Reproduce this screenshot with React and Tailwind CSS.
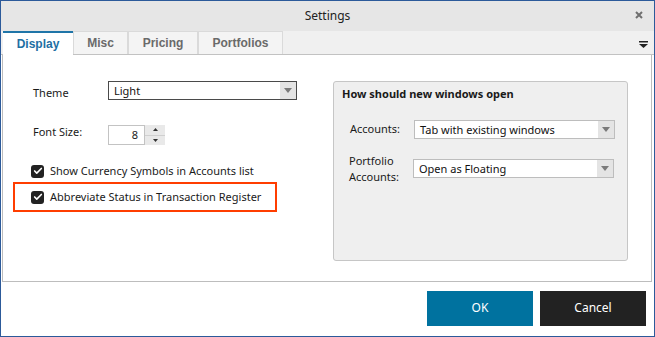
import { Check } from "lucide-react";

const ui = { fontFamily: '"Noto Sans", "Open Sans", sans-serif' };
const arial = { fontFamily: '"Liberation Sans", Arial, sans-serif' };

const Tab = ({ label, width, active }) => (
  <div
    className={`h-[23px] flex items-center justify-center text-[12px] font-bold ${width} ${
      active
        ? "bg-white border-t-2 border-t-[#1f75a8] text-[#1f6fa3] -mb-px h-[24px]"
        : "bg-[#f4f4f4] border border-[#dadada] border-b-0 text-[#6a6a6a]"
    }`}
    style={arial}
  >
    {label}
  </div>
);

const Select = ({ value, className, dark }) => (
  <div
    className={`shrink-0 flex items-center bg-white border ${
      dark ? "border-[#4a4a4a]" : "border-[#bdbdbd]"
    } ${className}`}
  >
    <span className="flex-1 pl-[5px] text-[11px] text-[#111] leading-none whitespace-nowrap">{value}</span>
    <div className="w-[16px] h-full bg-[#e4e4e4] flex items-center justify-center">
      <svg width="8" height="5" viewBox="0 0 8 5">
        <path d="M0 0h8L4 5z" fill="#7a7a7a" />
      </svg>
    </div>
  </div>
);

const CheckBox = ({ label }) => (
  <label className="flex items-center gap-[6px] h-[16px] text-[11px] text-[#1a1a1a] whitespace-nowrap">
    <span className="shrink-0 w-[13px] h-[13px] rounded-[3px] bg-[#222] flex items-center justify-center">
      <Check className="w-[10px] h-[10px] text-white" strokeWidth={4} />
    </span>
    {label}
  </label>
);

export default function App() {
  return (
    <div
      className="w-[655px] h-[337px] border border-[#2c5a9a] bg-white flex flex-col text-[#1a1a1a]"
      style={ui}
    >
      {/* title bar */}
      <div className="h-[30px] bg-[#e6e6e6] relative flex items-center justify-center text-[12px] text-[#222]">
        Settings
        <svg className="absolute right-[11px] top-[10px]" width="8" height="8" viewBox="0 0 8 8">
          <path d="M1 1l6 6M7 1L1 7" stroke="#6f6f6f" strokeWidth="2" />
        </svg>
      </div>

      {/* tab strip */}
      <div className="h-[24px] bg-[#f0f0f0] flex items-end pl-[2px] border-b border-[#c2c2c2] relative">
        <Tab label="Display" width="w-[70px]" active />
        <Tab label="Misc" width="w-[55px]" />
        <Tab label="Pricing" width="w-[70px]" />
        <Tab label="Portfolios" width="w-[85px]" />
        <svg className="absolute right-[6px] top-[10px]" width="9" height="7" viewBox="0 0 9 7">
          <rect x="0" y="0" width="9" height="1.5" fill="#222" />
          <path d="M0 3h9L4.5 7z" fill="#222" />
        </svg>
      </div>

      {/* content */}
      <div className="flex-1 ml-px mr-[2px] border-l border-r border-b border-[#bdbdbd] flex">
        <div className="w-[330px] shrink-0 pt-[26px] flex flex-col">
          <div className="flex items-center h-[19px]">
            <span className="w-[105px] shrink-0 pl-[30px] text-[11px] pt-[5px]">Theme</span>
            <Select value="Light" className="w-[189px] h-[19px]" dark />
          </div>

          <div className="flex items-center h-[20px] mt-[25px]">
            <span className="w-[105px] shrink-0 pl-[30px] text-[11px] -mt-[5px] whitespace-nowrap">Font Size:</span>
            <div className="shrink-0 w-[37px] h-[20px] border border-[#c3c3c3] flex items-center justify-end pr-[6px] text-[11px]">
              8
            </div>
            <div className="shrink-0 w-[20px] h-[20px] flex flex-col bg-[#e9e9e9]">
              <div className="flex-1 flex items-center justify-center border-b border-[#d0d0d0]">
                <svg width="5" height="3" viewBox="0 0 5 3">
                  <path d="M0 3h5L2.5 0z" fill="#333" />
                </svg>
              </div>
              <div className="flex-1 flex items-center justify-center">
                <svg width="5" height="3" viewBox="0 0 5 3">
                  <path d="M0 0h5L2.5 3z" fill="#333" />
                </svg>
              </div>
            </div>
          </div>

          <div className="pl-[28px] mt-[18px]">
            <CheckBox label="Show Currency Symbols in Accounts list" />
          </div>
          <div className="ml-[10px] mt-[3px] w-[264px] h-[30px] border-2 border-[#ff3d00] flex items-center pl-[16px]">
            <CheckBox label="Abbreviate Status in Transaction Register" />
          </div>
        </div>

        <div className="pt-[26px]">
          <div className="w-[295px] h-[180px] bg-[#efefef] border border-[#c6c6c6] rounded-[3px] pt-[4px]">
            <div className="pl-[8px] h-[16px] leading-[16px] text-[11px] font-bold">How should new windows open</div>
            <div className="flex items-center mt-[18px] pl-[16px]">
              <span className="w-[64px] shrink-0 text-[11px]">Accounts:</span>
              <Select value="Tab with existing windows" className="w-[201px] h-[19px]" />
            </div>
            <div className="flex items-start mt-[14px] pl-[15px]">
              <span className="w-[64px] shrink-0 text-[11px] leading-[16px]">
                Portfolio
                <br />
                Accounts:
              </span>
              <Select value="Open as Floating" className="w-[201px] h-[19px] mt-[6px]" />
            </div>
          </div>
        </div>
      </div>

      {/* footer */}
      <div className="h-[54px] flex items-center justify-end gap-[7px] pr-[8px] pb-[2px]">
        <button className="w-[106px] h-[35px] bg-[#00729f] text-white text-[12px]">OK</button>
        <button className="w-[106px] h-[35px] bg-[#222222] text-white text-[12px]">Cancel</button>
      </div>
    </div>
  );
}
